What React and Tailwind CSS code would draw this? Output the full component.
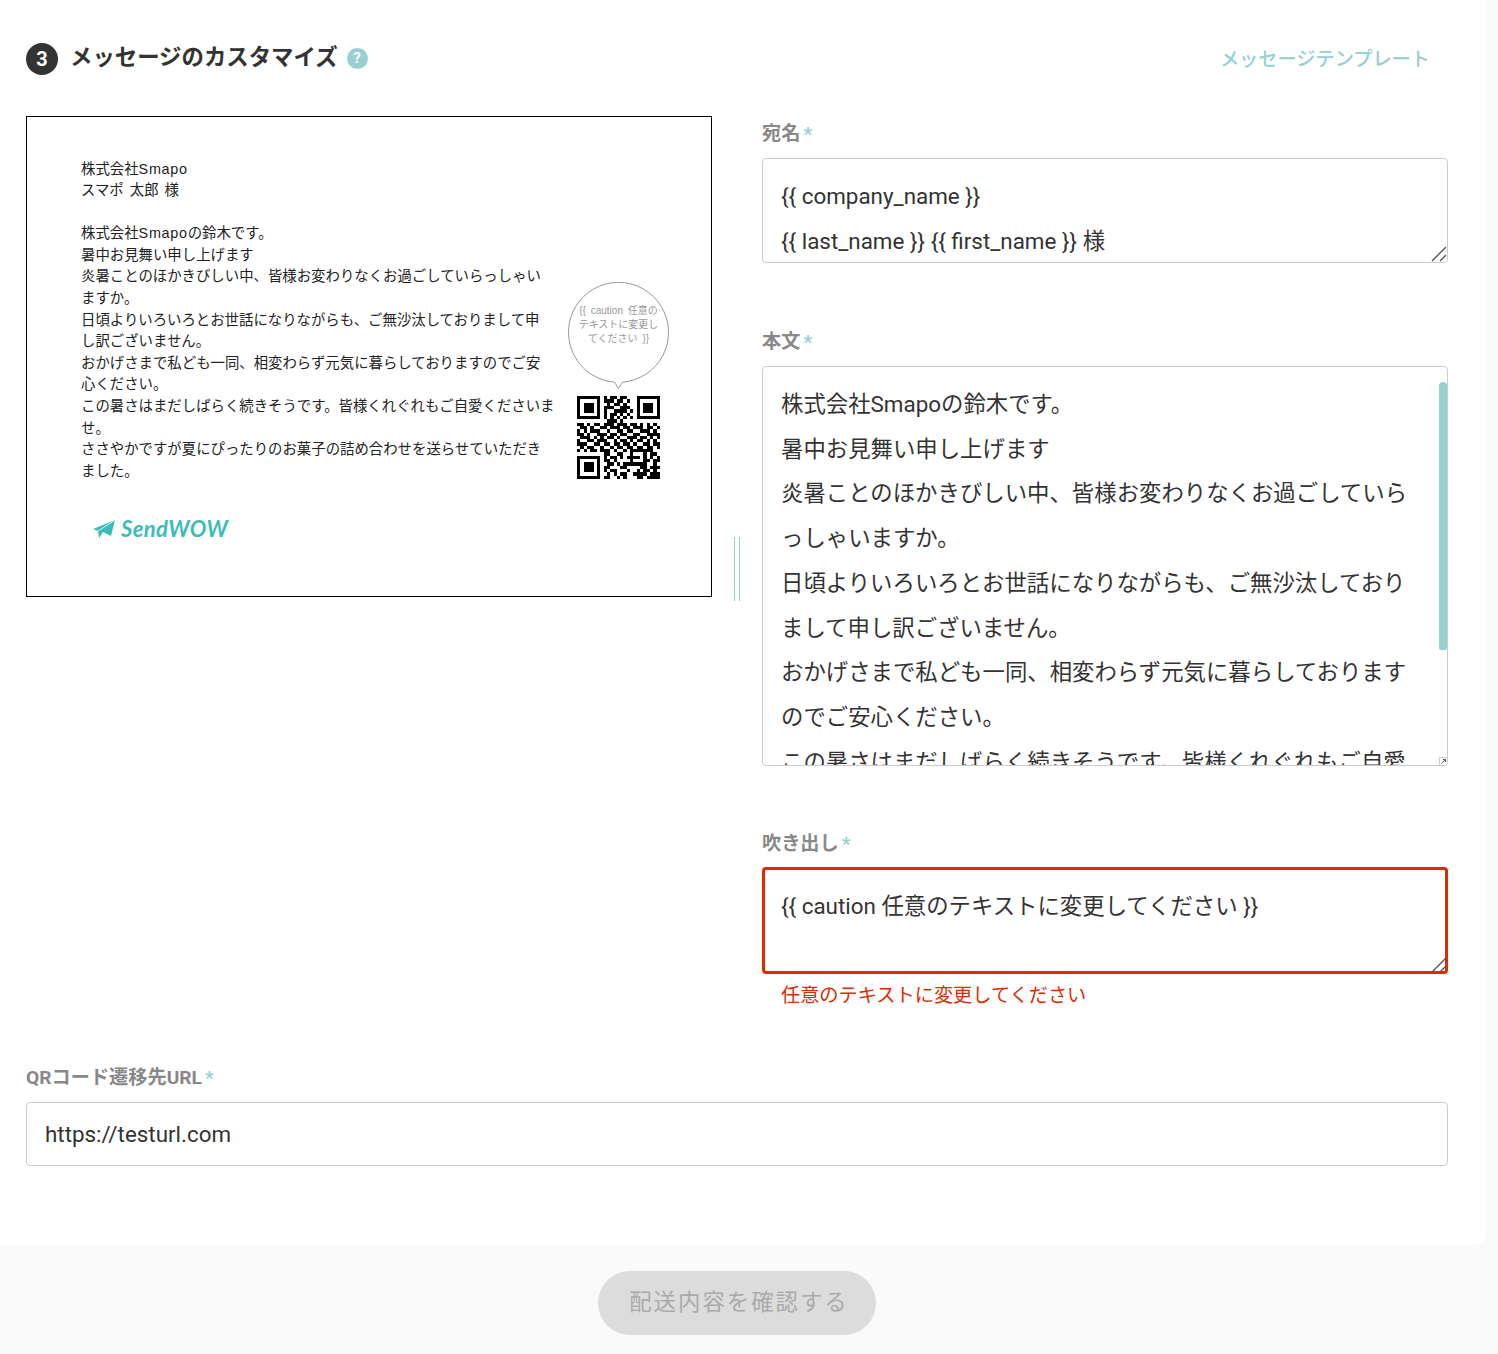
import React from "react";

const font = "font-['Roboto','Noto_Sans_CJK_JP',sans-serif]";

const qrRows = [
  "1111111010110110001111111",
  "1000001011101101001000001",
  "1011101001011010001011101",
  "1011101011100111001011101",
  "1011101010011110101011101",
  "1000001010110101001000001",
  "1111111010101010101111111",
  "0000000001110100000000000",
  "1101011011101110110101010",
  "0110100110111011011101101",
  "1010111001001101100111010",
  "1101001110110110011001111",
  "0111010101101001110110101",
  "1001101110010110101101010",
  "1110011011011011010011011",
  "0101100100101101101101101",
  "1010110111010010111111100",
  "0000000011001100100010110",
  "1111111010110101111010101",
  "1000001011010000100011011",
  "1011101001101011111110010",
  "1011101011000110000110111",
  "1011101010110001001011010",
  "1000001001010110011110111",
  "1111111011001010001101111",
];

const previewLines = [
  "株式会社Smapo",
  "スマポ 太郎 様",
  "\u00a0",
  "株式会社Smapoの鈴木です。",
  "暑中お見舞い申し上げます",
  "炎暑ことのほかきびしい中、皆様お変わりなくお過ごしていらっしゃい",
  "ますか。",
  "日頃よりいろいろとお世話になりながらも、ご無沙汰しておりまして申",
  "し訳ございません。",
  "おかげさまで私ども一同、相変わらず元気に暮らしておりますのでご安",
  "心ください。",
  "この暑さはまだしばらく続きそうです。皆様くれぐれもご自愛くださいま",
  "せ。",
  "ささやかですが夏にぴったりのお菓子の詰め合わせを送らせていただき",
  "ました。",
];

const bodyLines = [
  "株式会社Smapoの鈴木です。",
  "暑中お見舞い申し上げます",
  "炎暑ことのほかきびしい中、皆様お変わりなくお過ごしていら",
  "っしゃいますか。",
  "日頃よりいろいろとお世話になりながらも、ご無沙汰しており",
  "まして申し訳ございません。",
  "おかげさまで私ども一同、相変わらず元気に暮らしております",
  "のでご安心ください。",
  "この暑さはまだしばらく続きそうです。皆様くれぐれもご自愛",
];

const QrCode = () => (
  <svg viewBox="0 0 25 25" shapeRendering="crispEdges" className="w-[83px] h-[83px] block">
    {qrRows.map((row, y) =>
      row.split("").map((c, x) => (c === "1" ? <rect key={x + "-" + y} x={x} y={y} width="1" height="1" fill="#000" /> : null))
    )}
  </svg>
);

const Resizer = ({ className = "right-0 bottom-0" }) => (
  <svg viewBox="0 0 16 16" className={`absolute w-4 h-4 ${className}`}>
    <path d="M1 15 L15 1 M9 15 L15 9" stroke="#555" strokeWidth="1.4" fill="none" />
  </svg>
);

const Label = ({ children }) => (
  <div className="h-[24px] text-[19.2px] leading-[26px] font-bold text-[#888888]">
    {children}
    <span className="ml-[3px] text-[#97d0d0]">*</span>
  </div>
);

// the latin part runs a little wider in the preview
const PreviewLine = ({ line }) => {
  const parts = line.split("Smapo");
  if (parts.length === 1) return line;
  return (
    <>
      {parts[0]}
      <span className="tracking-[0.7px]">Smapo</span>
      {parts[1]}
    </>
  );
};

export default function App() {
  return (
    <div className={`${font} w-full h-[1354px] bg-[#fafafa] overflow-hidden`}>
      <div className="w-[1486px] h-[1245px] bg-white rounded-br-[12px] pl-[26px] pr-[38px]">
        {/* header */}
        <div className="flex items-center justify-between h-[116px] pt-[1px]">
          <div className="flex items-center">
            <div className="w-8 h-8 rounded-full bg-[#333333] text-white text-[20px] font-bold flex items-center justify-center">
              3
            </div>
            <div className="ml-[12px] -mt-[2px] text-[22.4px] font-bold text-[#333333]">メッセージのカスタマイズ</div>
            <div className="ml-[9px] w-[21px] h-[21px] rounded-full bg-[#97d0d0] text-white text-[15px] font-bold flex items-center justify-center">
              ?
            </div>
          </div>
          <div className="mr-[18px] mt-[4px] text-[19.2px] font-medium text-[#97d0d0]">メッセージテンプレート</div>
        </div>

        <div className="flex items-start">
          {/* preview */}
          <div className="w-[686px] h-[481px] border border-black flex font-['Liberation_Sans','Noto_Sans_CJK_JP',sans-serif]">
            <div className="w-[541px] pl-[54px] pt-[41.5px]">
              {previewLines.map((line, i) => (
                <div key={i} className="text-[14.4px] leading-[21.6px] text-[#222222] whitespace-nowrap [word-spacing:2px]">
                  <PreviewLine line={line} />
                </div>
              ))}
              <div className="flex items-center ml-[12px] mt-[34px]">
                <svg viewBox="0 0 22 18" className="w-[22px] h-[18px]">
                  <path d="M0 9 L22 0 L18 16 L10 12 L6 18 L5 11 Z" fill="#3cbcb8" />
                  <path d="M5 11 L22 0" stroke="#fff" strokeWidth="0.8" />
                </svg>
                <span className="ml-[6px] font-['Lato',sans-serif] text-[22px] leading-[26px] tracking-[0.4px] font-bold italic text-[#3cbcb8]">
                  SendWOW
                </span>
              </div>
            </div>
            <div className="pt-[165px]">
              <div className="relative w-[101px] h-[108px]">
                <svg viewBox="0 0 101 108" className="w-[101px] h-[108px] block">
                  <path
                    d="M46.5 100.2 A50 50 0 1 1 54.5 100.2 L50.5 106.5 Z"
                    fill="#fff"
                    stroke="#999"
                    strokeWidth="1"
                  />
                </svg>
                <div className="absolute left-0 top-[22px] w-[101px] text-center text-[10px] leading-[14px] text-[#999999] whitespace-nowrap [word-spacing:2px]">
                  <div>{"{{ caution 任意の"}</div>
                  <div>テキストに変更し</div>
                  <div>{"てください }}"}</div>
                </div>
              </div>
              <div className="ml-[9px] mt-[6px]">
                <QrCode />
              </div>
            </div>
          </div>

          {/* divider handle */}
          <div className="w-[76px] pl-[22px] pt-[421px]">
            <div className="w-[6px] h-[64px] border-x border-[#97d0d0]" />
          </div>

          {/* fields */}
          <div className="w-[686px] -ml-[26px] pt-[5px]">
            <Label>宛名</Label>
            <div className="relative mt-[13px] h-[105px] border border-[#cccccc] rounded-[4px] pl-[18px] pt-[15px] text-[22.4px] leading-[44.7px] text-[#333333]">
              <div>{"{{ company_name }}"}</div>
              <div>{"{{ last_name }} {{ first_name }} 様"}</div>
              <Resizer />
            </div>

            <div className="mt-[66px]">
              <Label>本文</Label>
            </div>
            <div className="relative mt-[13px] h-[400px] border border-[#cccccc] rounded-[4px] overflow-hidden pl-[18px] pt-[15px] text-[22.4px] leading-[44.7px] text-[#333333]">
              {bodyLines.map((line, i) => (
                <div key={i} className="whitespace-nowrap">
                  {line}
                </div>
              ))}
              <div className="absolute right-0 top-[15px] w-[8px] h-[268px] rounded-t-[4px] rounded-b-[2px] bg-[#97d0d0]" />
              <div className="absolute right-0 bottom-0 w-[8px] h-[8px] bg-white border-l border-t border-[#cccccc]">
                <svg viewBox="0 0 7 7" className="w-[7px] h-[7px] block">
                  <path d="M1.5 5.5 L5.5 1.5 M3 1.5 H5.5 V4" stroke="#555" strokeWidth="1" fill="none" />
                </svg>
              </div>
            </div>

            <div className="mt-[65px]">
              <Label>吹き出し</Label>
            </div>
            <div className="relative mt-[12px] h-[107px] border-[3px] border-[#dd2c00] rounded-[4px] pl-[16px] pt-[14px] text-[22.4px] leading-[44.7px] text-[#333333]">
              {"{{ caution 任意のテキストに変更してください }}"}
              <Resizer className="-right-[2px] -bottom-[2px]" />
            </div>
            <div className="mt-[9px] ml-[19px] text-[19.2px] leading-[26px] text-[#dd2c00]">
              任意のテキストに変更してください
            </div>
          </div>
        </div>

        {/* url */}
        <div className="mt-[56px]">
          <Label>QRコード遷移先URL</Label>
          <div className="mt-[13px] h-[64px] border border-[#cccccc] rounded-[4px] pl-[18px] pt-[1px] flex items-center text-[22.4px] text-[#333333]">
            https://testurl.com
          </div>
        </div>
      </div>

      {/* footer */}
      <div className="w-[1474px] flex justify-center pt-[26px]">
        <div className="w-[278px] h-[64px] pb-[1px] pl-[4px] rounded-[32px] bg-[#dcdcdc] text-[#aaaaaa] text-[22.4px] tracking-[2px] flex items-center justify-center">
          配送内容を確認する
        </div>
      </div>
    </div>
  );
}
